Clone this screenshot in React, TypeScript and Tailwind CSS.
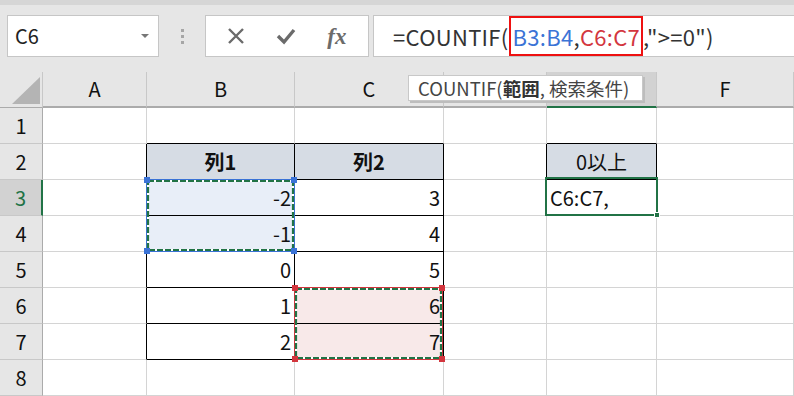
import { ReactNode } from 'react'

const FONT = "font-['Noto_Sans_CJK_JP','Noto_Sans',sans-serif]"

const COLS = ['A', 'B', 'C', 'D', 'E', 'F']
const ROWS = [1, 2, 3, 4, 5, 6, 7, 8]

const values: Record<string, string> = {
  B2: '列1',
  C2: '列2',
  E2: '0以上',
  B3: '-2',
  C3: '3',
  E3: 'C6:C7,',
  B4: '-1',
  C4: '4',
  B5: '0',
  C5: '5',
  B6: '1',
  C6: '6',
  B7: '2',
  C7: '7',
}

const blackRight = new Set([
  'A2', 'A3', 'A4', 'A5', 'A6', 'A7',
  'B2', 'B3', 'B4', 'B5', 'B6', 'B7',
  'C2', 'C3', 'C4', 'C5', 'C6', 'C7',
  'D2', 'E2',
])
const blackBottom = new Set([
  'B1', 'C1', 'E1', 'E2',
  'B2', 'B3', 'B4', 'B5', 'B6', 'B7',
  'C2', 'C3', 'C4', 'C5', 'C6', 'C7',
])
const fills: Record<string, string> = {
  B2: 'bg-[#d6dce4]',
  C2: 'bg-[#d6dce4]',
  E2: 'bg-[#d6dce4]',
  B3: 'bg-[#e8eef8]',
  B4: 'bg-[#e8eef8]',
  C6: 'bg-[#f8e9e9]',
  C7: 'bg-[#f8e9e9]',
}

function Cell({ id }: { id: string }) {
  const row = Number(id.slice(1))
  const text = values[id]
  const header = row === 2
  const left = id === 'E3'
  const align = header
    ? 'justify-center'
    : left
      ? 'justify-start pl-[3px]'
      : 'justify-end pr-[3px]'
  return (
    <div
      className={[
        'flex items-center h-[36px] border-r border-b text-[20px] leading-none text-[#111]',
        blackRight.has(id) ? 'border-r-black' : 'border-r-[#d4d4d4]',
        blackBottom.has(id) ? 'border-b-black' : 'border-b-[#d4d4d4]',
        fills[id] ?? 'bg-white',
        align,
        header && id !== 'E2' ? 'font-bold' : '',
      ].join(' ')}
    >
      {text}
    </div>
  )
}

function Handle({ className }: { className: string }) {
  return <div className={'absolute w-[6px] h-[6px] ' + className} />
}

function Marquee({
  box,
  color,
  handle,
}: {
  box: string
  color: string
  handle: string
}) {
  return (
    <div className={'absolute pointer-events-none ' + box}>
      <svg width="149" height="73" className="absolute left-0 top-0">
        <rect x="0.5" y="0.5" width="148" height="72" fill="none" stroke={color} />
        <rect x="2" y="2" width="145" height="69" fill="none" stroke="#fff" strokeWidth="2" />
        <rect
          x="2"
          y="2"
          width="145"
          height="69"
          fill="none"
          stroke="#217346"
          strokeWidth="2.2"
          strokeDasharray="6 2"
        />
      </svg>
      <Handle className={'-left-[2px] -top-[2px] ' + handle} />
      <Handle className={'-right-[2px] -top-[2px] ' + handle} />
      <Handle className={'-left-[2px] -bottom-[2px] ' + handle} />
      <Handle className={'-right-[2px] -bottom-[2px] ' + handle} />
    </div>
  )
}

function Box({ className, children }: { className: string; children: ReactNode }) {
  return (
    <div
      className={
        'h-[42px] bg-white border border-[#c6c6c6] flex items-center ' + className
      }
    >
      {children}
    </div>
  )
}

function Toolbar() {
  return (
    <div className="h-[72px] flex flex-col">
      <div className="h-[5px] bg-[#d6d6d6]" />
      <div className="flex items-start pt-[10px] pl-[7px]">
        <Box className="w-[152px] justify-between pl-[7px] pr-[9px]">
          <span className="text-[20px] leading-none text-[#222]">C6</span>
          <span className="w-0 h-0 border-l-[4px] border-r-[4px] border-t-[4px] border-l-transparent border-r-transparent border-t-[#777]" />
        </Box>
        <div className="w-[46px] h-[42px] flex flex-col items-center justify-center gap-[3px]">
          <span className="w-[3px] h-[3px] bg-[#a6a6a6]" />
          <span className="w-[3px] h-[3px] bg-[#a6a6a6]" />
          <span className="w-[3px] h-[3px] bg-[#a6a6a6]" />
        </div>
        <Box className="w-[164px] justify-around px-[6px]">
          <svg width="18" height="18" viewBox="0 0 18 18">
            <path d="M2 2 L16 16 M16 2 L2 16" stroke="#6b6b6b" strokeWidth="2.4" />
          </svg>
          <svg width="20" height="18" viewBox="0 0 20 18">
            <path d="M2 9 L8 15 L18 3" stroke="#6b6b6b" strokeWidth="3.4" fill="none" />
          </svg>
          <span className="font-['Liberation_Serif',serif] italic font-bold text-[23px] text-[#6b6b6b] leading-none">
            fx
          </span>
        </Box>
        <Box className="ml-[4px] flex-1 pl-[19px] border-r-0 text-[22px] leading-none text-[#333] tracking-[0.3px]">
          <span>=COUNTIF(</span>
          <span className="h-[40px] flex items-center border-2 border-[#ee1111] pl-[2px] pr-[1px]">
            <span className="text-[#3b73d6]">B3:B4</span>
            <span>,</span>
            <span className="text-[#d3363e]">C6:C7</span>
          </span>
          <span>,"&gt;=0")</span>
        </Box>
      </div>
    </div>
  )
}

export default function App() {
  return (
    <div
      className={
        'relative w-[794px] h-[396px] overflow-hidden bg-[#e6e6e6] ' + FONT
      }
    >
      <Toolbar />
      <div className="grid grid-cols-[43px_104px_148px_149px_103px_110px_137px]">
        <div className="h-[36px] border-r border-b border-r-[#c8c8c8] border-b-[#ababab] relative">
          <svg width="30" height="28" className="absolute left-[11px] top-[5px]">
            <polygon points="1,27 29,27 29,0" fill="#b4b4b4" />
          </svg>
        </div>
        {COLS.map((c) => (
          <div
            key={c}
            className={
              'h-[36px] flex items-center justify-center text-[20px] leading-none text-[#111] border-r border-r-[#c8c8c8] border-b-2 ' +
              (c === 'E' ? 'bg-[#d2d2d2] border-b-[#217346]' : 'border-b-[#ababab]')
            }
          >
            {c}
          </div>
        ))}
        {ROWS.map((r) => [
          <div
            key={'h' + r}
            className={
              'h-[36px] flex items-center justify-center text-[20px] leading-none border-b border-b-[#c8c8c8] ' +
              (r === 3
                ? 'bg-[#d2d2d2] text-[#217346] border-r-2 border-r-[#217346]'
                : 'text-[#111] border-r border-r-[#ababab]')
            }
          >
            {r}
          </div>,
          ...COLS.map((c) => <Cell key={c + r} id={c + r} />),
        ])}
      </div>

      <Marquee box="left-[146px] top-[179px] w-[149px] h-[73px]" color="#3b73d6" handle="bg-[#3b73d6]" />
      <Marquee box="left-[294px] top-[287px] w-[149px] h-[73px]" color="#d3363e" handle="bg-[#d3363e]" />

      <div className="absolute left-[545px] top-[177px] w-[113px] h-[39px] border-2 border-[#217346] pointer-events-none">
        <div className="absolute -right-[4px] -bottom-[4px] w-[6px] h-[6px] bg-[#217346] border border-white" />
      </div>

      <div className="absolute left-[408px] top-[75px] w-[235px] h-[26px] bg-white border border-[#c8c8c8] shadow-[2px_2px_0_#bdbdbd] flex items-center pl-[9px] text-[18.5px] leading-none text-[#444] whitespace-nowrap">
        <span>COUNTIF(</span>
        <span className="font-bold text-[#333]">範囲</span>
        <span>, 検索条件)</span>
      </div>
    </div>
  )
}
